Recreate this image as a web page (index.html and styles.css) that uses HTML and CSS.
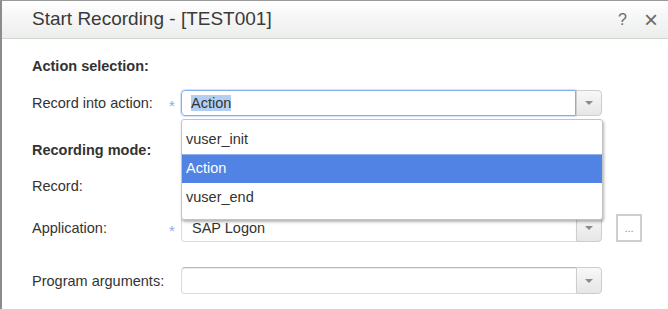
FILE: index.html
```html
<!DOCTYPE html>
<html lang="en">
<head>
    <meta charset="UTF-8">
    <title>Start Recording - [TEST001]</title>
    <link rel="stylesheet" href="styles.css">
</head>
<body>
    <div class="dialog">
        <div class="dialog-header">
            <h1>Start Recording - [TEST001]</h1>
            <div class="header-tools">
                <span class="tool">?</span>
                <span class="tool close">&times;</span>
            </div>
        </div>

        <div class="dialog-body">
            <div class="section-title">Action selection:</div>

            <div class="form-row first">
                <label>Record into action:</label>
                <span class="star">*</span>
                <div class="field">
                    <div class="combo">
                        <div class="combo-input focused"><span class="selected-text">Action</span></div>
                        <div class="combo-btn"><span class="arrow"></span></div>
                    </div>
                    <ul class="dropdown">
                        <li>vuser_init</li>
                        <li class="active">Action</li>
                        <li>vuser_end</li>
                    </ul>
                </div>
            </div>

            <div class="section-title mode">Recording mode:</div>

            <div class="form-row record">
                <label>Record:</label>
            </div>

            <div class="form-row app">
                <label>Application:</label>
                <span class="star">*</span>
                <div class="field">
                    <div class="combo">
                        <div class="combo-input">SAP Logon</div>
                        <div class="combo-btn"><span class="arrow"></span></div>
                    </div>
                </div>
                <button class="browse-btn">...</button>
            </div>

            <div class="form-row args">
                <label>Program arguments:</label>
                <span class="star"></span>
                <div class="field">
                    <div class="combo">
                        <div class="combo-input"></div>
                        <div class="combo-btn"><span class="arrow"></span></div>
                    </div>
                </div>
            </div>
        </div>
    </div>
</body>
</html>
```

FILE: styles.css
```css
* {
    margin: 0;
    padding: 0;
    box-sizing: border-box;
}

body {
    font-family: 'Liberation Sans', Arial, sans-serif;
    background: white;
    color: #333;
    height: 309px;
    overflow: hidden;
}

.dialog {
    height: 100%;
    border-top: 1px solid #9a9a9a;
    border-left: 2px solid #8c8c8c;
    background: white;
}

.dialog-header {
    height: 38px;
    display: flex;
    align-items: center;
    justify-content: space-between;
    padding: 0 10px 0 30px;
    background: linear-gradient(#ffffff, #f6f7f6 40%, #eceeec);
    border-bottom: 1px solid #d4d6d4;
}

.dialog-header h1 {
    font-size: 19px;
    font-weight: normal;
    color: #3a3a3a;
    margin-top: -1px;
}

.header-tools {
    display: flex;
    align-items: center;
    gap: 17px;
    color: #6a6a6a;
    font-size: 16px;
}

.tool.close {
    font-size: 24px;
    line-height: 16px;
}

.dialog-body {
    padding: 17px 0 0 30px;
}

.section-title {
    font-size: 14.5px;
    font-weight: bold;
    line-height: 20px;
    color: #333;
}

.section-title.mode {
    margin-top: 24px;
}

.form-row {
    display: flex;
    align-items: center;
    font-size: 14.5px;
}

.form-row label {
    width: 133px;
    color: #333;
}

.form-row.first {
    margin-top: 14px;
}

.form-row.record {
    margin-top: 13px;
    height: 26px;
}

.form-row.app {
    margin-top: 15px;
}

.form-row.args {
    margin-top: 25px;
}

.star {
    width: 16px;
    color: #86acea;
    font-size: 15px;
    padding-top: 5px;
    padding-left: 4px;
}

.field {
    position: relative;
    width: 421px;
}

.combo {
    display: flex;
    height: 27px;
}

.combo-input {
    flex: 1;
    border: 1px solid #dcdcdc;
    border-top-color: #b8b8b8;
    border-right: none;
    border-radius: 4px 0 0 4px;
    padding: 0 10px;
    line-height: 25px;
    font-size: 14.5px;
    color: #333;
    box-shadow: inset 0 1px 1px rgba(0,0,0,0.08);
}

.first .combo {
    height: 26px;
}

.combo-input.focused {
    border: 1px solid #84aef0;
    border-right: 1px solid #84aef0;
    box-shadow: 0 0 0 1px #d6e4fa;
    padding-left: 9px;
    line-height: 24px;
}

.selected-text {
    background: #b2cff3;
}

.combo-btn {
    width: 26px;
    border: 1px solid #cdcdcd;
    border-radius: 0 4px 4px 0;
    background: linear-gradient(#f8f8f8, #e6e6e6);
    display: flex;
    align-items: center;
    justify-content: center;
}

.arrow {
    width: 0;
    height: 0;
    border-left: 4px solid transparent;
    border-right: 4px solid transparent;
    border-top: 4px solid #8a8a8a;
}

.dropdown {
    position: absolute;
    top: 29px;
    left: 0;
    width: 422px;
    list-style: none;
    background: white;
    border: 1px solid #c4c4c4;
    border-radius: 3px;
    padding: 5px 0 7px;
    box-shadow: 1px 2px 3px rgba(0,0,0,0.3);
    z-index: 10;
}

.dropdown li {
    height: 29px;
    line-height: 29px;
    padding-left: 4px;
    font-size: 14.5px;
    color: #333;
}

.dropdown li.active {
    background: #5083e3;
    color: white;
    border-top: 1px solid #8fb0ee;
    line-height: 27px;
}

.browse-btn {
    margin-left: 14px;
    width: 26px;
    height: 28px;
    border: 2px solid #cfcfcf;
    background: white;
    color: #7a8fb0;
    font-size: 11px;
    font-family: 'Liberation Sans', Arial, sans-serif;
    line-height: 20px;
}
```
